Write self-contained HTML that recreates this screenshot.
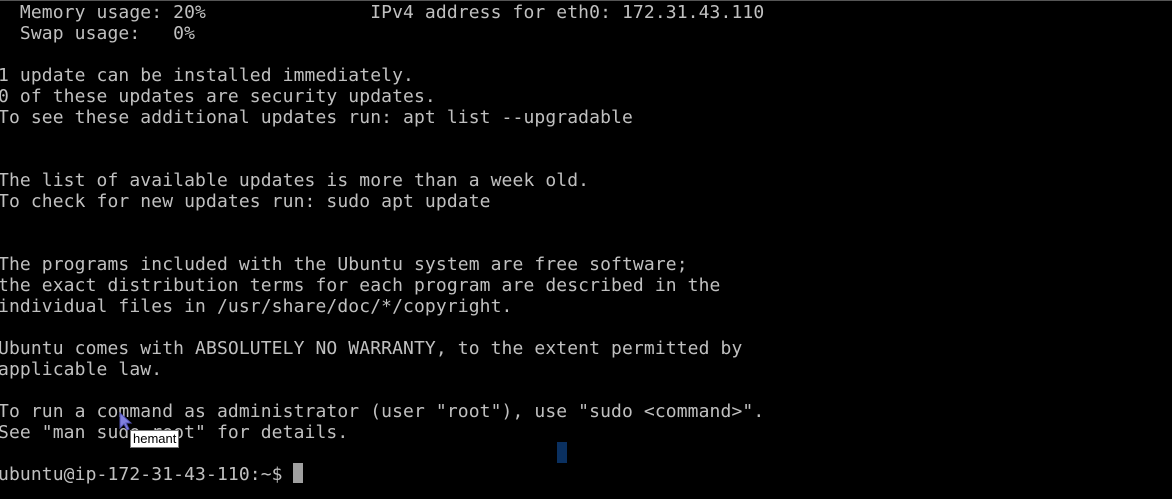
<!DOCTYPE html>
<html><head><meta charset="utf-8"><style>
html,body{margin:0;padding:0;background:#000;width:1172px;height:499px;overflow:hidden;position:relative}
pre{position:absolute;left:-2px;top:2px;margin:0;font-family:"DejaVu Sans Mono","Liberation Mono",monospace;font-size:18px;letter-spacing:0.11px;line-height:21px;color:#c0c0c0;white-space:pre}
.top{position:absolute;left:0;top:0;width:1172px;height:1px;background:#555}
.cur{position:absolute;left:293px;top:463px;width:10px;height:20px;background:#a0a0a0}
.blue{position:absolute;left:557px;top:442px;width:10px;height:21px;background:#0a3060}
.tip{position:absolute;left:130px;top:430px;height:16px;padding:0 2px;background:#fff;color:#000;font:13px "Liberation Sans",sans-serif;line-height:16px;border:1px solid #777}
</style></head><body>
<div class="top"></div>
<pre>  Memory usage: 20%               IPv4 address for eth0: 172.31.43.110
  Swap usage:   0%

1 update can be installed immediately.
0 of these updates are security updates.
To see these additional updates run: apt list --upgradable


The list of available updates is more than a week old.
To check for new updates run: sudo apt update


The programs included with the Ubuntu system are free software;
the exact distribution terms for each program are described in the
individual files in /usr/share/doc/*/copyright.

Ubuntu comes with ABSOLUTELY NO WARRANTY, to the extent permitted by
applicable law.

To run a command as administrator (user "root"), use "sudo &lt;command&gt;".
See "man sudo_root" for details.

ubuntu@ip-172-31-43-110:~$ </pre>
<div class="cur"></div>
<div class="blue"></div>
<svg style="position:absolute;left:119px;top:412px" width="14" height="20"><path d="M1 1 L1 16 L5 12 L8 18 L10 17 L7 11 L12 11 Z" fill="#8080e0" stroke="#5050b0" stroke-width="1"/></svg>
<div class="tip">hemant</div>
</body></html>
